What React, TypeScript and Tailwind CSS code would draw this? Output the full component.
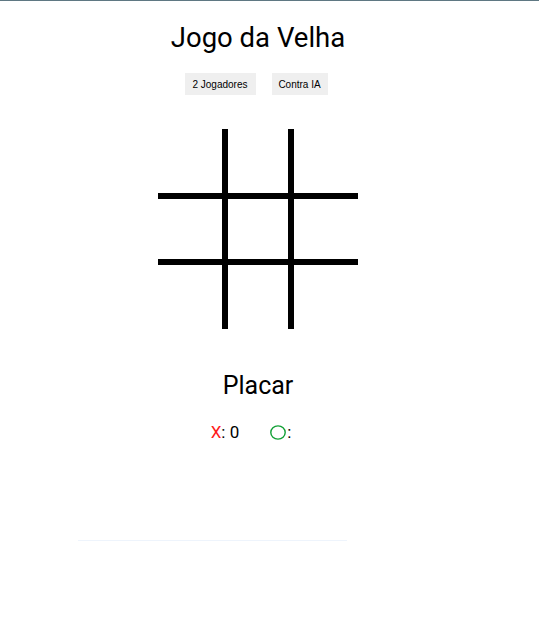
import React from 'react'

// ─── Sub-components ──────────────────────────────────────────────────────────
const cellBorders = [
  'border-r-[3px] border-b-[3px]',
  'border-x-[3px] border-b-[3px]',
  'border-l-[3px] border-b-[3px]',
  'border-r-[3px] border-y-[3px]',
  'border-[3px]',
  'border-l-[3px] border-y-[3px]',
  'border-r-[3px] border-t-[3px]',
  'border-x-[3px] border-t-[3px]',
  'border-l-[3px] border-t-[3px]',
]

const CircleMark: React.FC<{ big?: boolean }> = ({ big }) => (
  <svg
    viewBox="0 0 16 15"
    aria-hidden
    className={big ? 'h-[38px] w-[40px] shrink-0' : 'h-[15px] w-[16px] shrink-0'}
  >
    <ellipse cx="8" cy="7.5" rx="7.2" ry="6.6" fill="none" stroke="#12a036" strokeWidth="1.4" />
  </svg>
)

const Board: React.FC<{ cells: string[]; onPlay: (i: number) => void }> = ({ cells, onPlay }) => (
  <div className="grid h-[200px] w-[200px] grid-cols-3 grid-rows-3">
    {cellBorders.map((b, i) => (
      <button
        key={i}
        type="button"
        onClick={() => onPlay(i)}
        className={`flex items-center justify-center border-black bg-white text-[40px] ${b}`}
      >
        {cells[i] === 'X' && <span className="text-[#ff1a1a]">X</span>}
        {cells[i] === 'O' && <CircleMark big />}
      </button>
    ))}
  </div>
)

// ─── Main Component ──────────────────────────────────────────────────────────
const App: React.FC = () => {
  const [cells, setCells] = React.useState<string[]>(Array(9).fill(''))
  const [turn, setTurn] = React.useState<'X' | 'O'>('X')

  const play = (i: number) => {
    if (cells[i]) return
    const next = [...cells]
    next[i] = turn
    setCells(next)
    setTurn(turn === 'X' ? 'O' : 'X')
  }

  const reset = () => {
    setCells(Array(9).fill(''))
    setTurn('X')
  }

  const btnCls =
    "h-[22px] bg-[#efefef] text-[10px] text-black font-['Liberation_Sans',Arial,sans-serif]"

  return (
    <div className="min-h-[633px] bg-white font-['Roboto',sans-serif] text-black">
      <div className="h-px bg-[#5f7883]" />

      <div className="flex w-[516px] flex-col items-center">
        <h1 className="mt-[20px] text-[27.5px] leading-[33px] font-normal">Jogo da Velha</h1>

        <div className="mt-[19px] flex gap-4 pr-[4px]">
          <button type="button" className={`${btnCls} w-[71px]`} onClick={reset}>
            2 Jogadores
          </button>
          <button type="button" className={`${btnCls} w-[56px]`} onClick={reset}>
            Contra IA
          </button>
        </div>

        <div className="mt-[34px]">
          <Board cells={cells} onPlay={play} />
        </div>

        <h2 className="mt-[42px] text-[25px] leading-[29px] font-normal">Placar</h2>

        <div className="mt-[22px] flex items-center gap-[31px] pr-[14px] text-[17px] leading-[20px]">
          <span>
            <span className="text-[#ff1a1a]">X</span>: 0
          </span>
          <span className="flex items-center gap-px">
            <CircleMark />
            <span>:</span>
          </span>
        </div>
      </div>

      <div className="ml-[78px] mt-[98px] h-px w-[269px] bg-[#eef4fc]" />
    </div>
  )
}

export default App
